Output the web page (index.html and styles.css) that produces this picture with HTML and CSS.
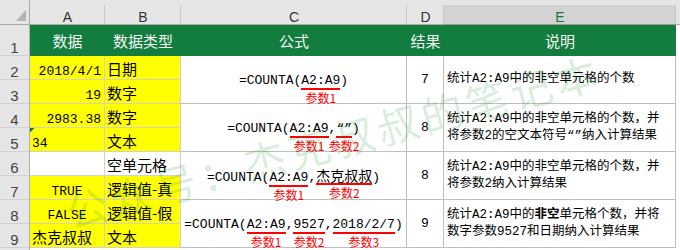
FILE: index.html
```html
<!DOCTYPE html>
<html lang="zh-CN">
<head>
<meta charset="utf-8">
<title>COUNTA</title>
<link rel="stylesheet" href="styles.css">
</head>
<body>
<div class="sheet">
  <div class="corner"><svg class="tri" width="29" height="24" viewBox="0 0 29 24"><polygon points="26,10 26,21 16,21" fill="#b4b4b4"/></svg></div>
  <div class="ch">A</div>
  <div class="ch">B</div>
  <div class="ch">C</div>
  <div class="ch">D</div>
  <div class="ch sel">E</div>
  <div class="ch rest"></div>

  <div class="rh">1</div>
  <div class="hd">数据</div>
  <div class="hd">数据类型</div>
  <div class="hd">公式</div>
  <div class="hd">结果</div>
  <div class="hd">说明</div>

  <div class="rh">2</div>
  <div class="a y num">2018/4/1</div>
  <div class="b y">日期</div>
  <div class="f m"><div class="fx">=COUNTA(<span class="arg">A2:A9<span class="lab">参数1</span></span>)</div></div>
  <div class="d m">7</div>
  <div class="e m"><p>统计A2:A9中的非空单元格的个数</p></div>

  <div class="rh">3</div>
  <div class="a y num">19</div>
  <div class="b y">数字</div>

  <div class="rh">4</div>
  <div class="a y num">2983.38</div>
  <div class="b y">数字</div>
  <div class="f m"><div class="fx">=COUNTA(<span class="arg">A2:A9<span class="lab">参数1</span></span>,<span class="arg">“”<span class="lab">参数2</span></span>)</div></div>
  <div class="d m">8</div>
  <div class="e m"><p>统计A2:A9中的非空单元格的个数，并<br>将参数2的空文本符号“”纳入计算结果</p></div>

  <div class="rh">5</div>
  <div class="a y txt flag">34</div>
  <div class="b y">文本</div>

  <div class="rh">6</div>
  <div class="a"></div>
  <div class="b">空单元格</div>
  <div class="f m"><div class="fx">=COUNTA(<span class="arg">A2:A9<span class="lab">参数1</span></span>,<span class="arg cj">杰克叔叔<span class="lab">参数2</span></span>)</div></div>
  <div class="d m">8</div>
  <div class="e m"><p>统计A2:A9中的非空单元格的个数，并<br>将参数2纳入计算结果</p></div>

  <div class="rh">7</div>
  <div class="a y ctr">TRUE</div>
  <div class="b y">逻辑值-真</div>

  <div class="rh">8</div>
  <div class="a y ctr">FALSE</div>
  <div class="b y">逻辑值-假</div>
  <div class="f m"><div class="fx">=COUNTA(<span class="arg">A2:A9<span class="lab">参数1</span></span>,<span class="arg">9527<span class="lab">参数2</span></span>,<span class="arg">2018/2/7<span class="lab">参数3</span></span>)</div></div>
  <div class="d m">9</div>
  <div class="e m"><p>统计A2:A9中的<b>非空</b>单元格个数，并将<br>数字参数9527和日期纳入计算结果</p></div>

  <div class="rh">9</div>
  <div class="a y txt cjk">杰克叔叔</div>
  <div class="b y">文本</div>

  <div class="rh end"></div>
</div>
<div class="wm">公众号：杰克叔叔的笔记本</div>
</body>
</html>
```
FILE: styles.css
```css
* { box-sizing: border-box; }

html, body {
  margin: 0;
  padding: 0;
}

body {
  width: 680px;
  height: 250px;
  overflow: hidden;
  background: #ffffff;
  position: relative;
  font-family: "Liberation Mono", "Noto Sans CJK SC", monospace;
  color: #000;
}

.sheet {
  display: grid;
  grid-template-columns: 30px 75px 76px 226px 37px 232px 1fr;
  grid-template-rows: 25px 31px repeat(8, 24px) 1fr;
  height: 250px;
}

/* corner and column headers */
.corner {
  grid-column: 1;
  background: #e6e6e6;
  border-right: 1px solid #ababab;
  border-bottom: 1px solid #ababab;
}
.tri { display: block; }

.ch {
  background: linear-gradient(#c8c8c8, #c8c8c8) right bottom / 1px 19px no-repeat, #e6e6e6;
  border-bottom: 1px solid #ababab;
  font-family: "Liberation Sans", sans-serif;
  font-size: 14px;
  line-height: 14px;
  color: #333;
  display: flex;
  align-items: flex-end;
  justify-content: center;
}
.ch.sel {
  background: linear-gradient(#c8c8c8, #c8c8c8) right bottom / 1px 19px no-repeat,
              linear-gradient(#d3d3d3, #d3d3d3) left bottom / 100% 19px no-repeat, #e6e6e6;
  color: #1f6e3f;
  border-bottom-color: #9a9a9a;
}
.ch.rest { background: #e6e6e6; }

/* row headers */
.rh {
  grid-column: 1;
  background: #e6e6e6;
  border-right: 1px solid #b0b0b0;
  border-bottom: 1px solid #d0d0d0;
  font-family: "Liberation Sans", sans-serif;
  font-size: 15px;
  line-height: 14px;
  color: #444;
  display: flex;
  align-items: flex-end;
  justify-content: center;
}
.rh.end { border-bottom: none; }

/* green title row */
.hd {
  background: #127d3f;
  color: #f2f6f2;
  font-family: "Noto Sans CJK SC", sans-serif;
  font-size: 15px;
  line-height: 22px;
  display: flex;
  align-items: center;
  justify-content: center;
  padding-top: 1px;
}

/* columns A and B */
.a, .b {
  border-right: 1px solid #d0d0d0;
  border-bottom: 1px solid #d0d0d0;
  display: flex;
  align-items: flex-end;
  white-space: nowrap;
}
.y { background-color: #ffff00; }

.a {
  font-size: 13px;
  line-height: 14px;
}
.a.num { justify-content: flex-end; padding-right: 3px; }
.a.txt { justify-content: flex-start; padding-left: 2px; }
.a.ctr { justify-content: center; }
.a.cjk {
  font-family: "Noto Sans CJK SC", sans-serif;
  font-size: 15px;
  line-height: 20px;
}
.a.flag {
  background-image: linear-gradient(135deg, #1f7a3a 3.5px, transparent 3.5px);
}

.b {
  font-family: "Liberation Mono", "Noto Sans CJK SC", sans-serif;
  font-size: 15px;
  line-height: 20px;
  padding-left: 2px;
}
.b { font-family: "Noto Sans CJK SC", sans-serif; }

/* merged cells C, D, E */
.m {
  grid-row: span 2;
  border-right: 1px solid #bfbfbf;
  border-bottom: 1px solid #bfbfbf;
  display: flex;
  align-items: center;
}

.f {
  justify-content: center;
  font-size: 13px;
  padding-top: 3px;
}
.fx {
  white-space: nowrap;
  line-height: 15px;
}
.arg {
  display: inline-block;
  position: relative;
  line-height: 15px;
  border-bottom: 2px solid #ff0000;
}
.arg.cj {
  font-family: "Noto Sans CJK SC", sans-serif;
  font-size: 14px;
}
.lab {
  position: absolute;
  left: 50%;
  top: calc(100% + 3px);
  transform: translateX(-50%);
  font-family: "Noto Sans CJK SC", sans-serif;
  font-size: 12px;
  line-height: 13px;
  color: #ff0000;
  white-space: nowrap;
}

.d {
  justify-content: center;
  font-size: 13px;
  line-height: 15px;
}

.e {
  padding-left: 3px;
  font-size: 12.5px;
  line-height: 17px;
}
.e p {
  margin: 0;
  white-space: nowrap;
}
.e b { font-weight: 700; }

/* watermark */
.wm {
  position: absolute;
  left: 66px;
  top: 191px;
  font-family: "Noto Sans CJK SC", sans-serif;
  font-size: 42px;
  line-height: 42px;
  letter-spacing: 4px;
  color: rgba(20, 140, 40, 0.16);
  transform: rotate(-15deg);
  transform-origin: left center;
  white-space: nowrap;
  pointer-events: none;
}
```
